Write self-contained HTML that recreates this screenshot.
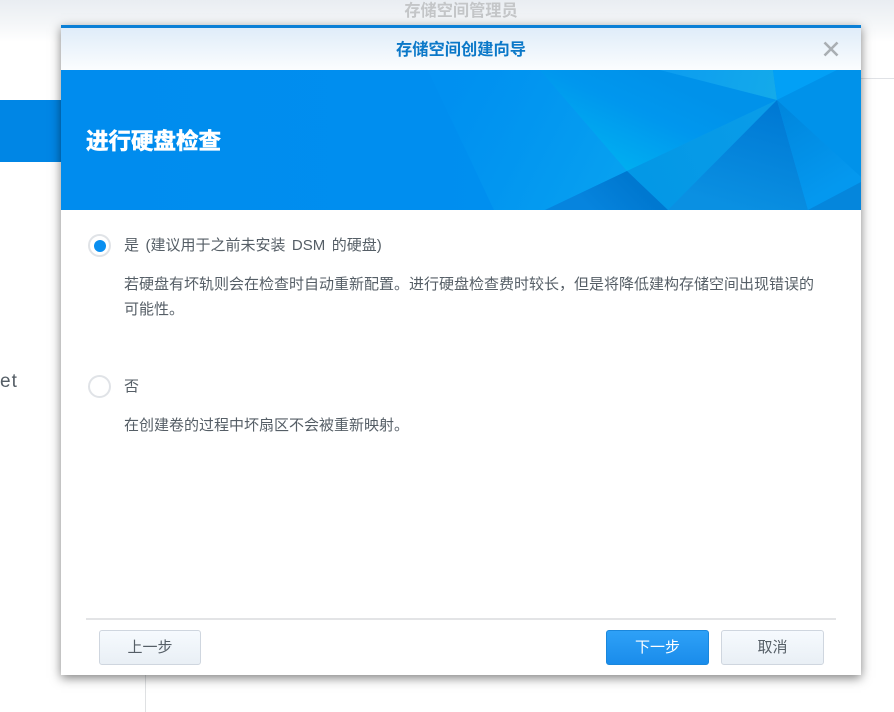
<!DOCTYPE html>
<html lang="zh">
<head>
<meta charset="utf-8">
<title>存储空间创建向导</title>
<style>
html,body{margin:0;padding:0;}
body{width:894px;height:712px;position:relative;overflow:hidden;background:#fff;font-family:"Liberation Sans","Noto Sans CJK SC",sans-serif;color:#555e66;}
.abs{position:absolute;white-space:nowrap;}
#top{left:0;top:0;width:894px;height:42px;background:linear-gradient(#e9edf2,#f4f6f8 55%,#fff);}
#apptitle{left:300px;width:322px;text-align:center;top:1px;font-size:16.2px;line-height:20px;font-weight:bold;color:#c4c6c8;}
#bar{left:0;top:100px;width:70px;height:62px;background:#0086e5;}
#et{left:0;top:372px;font-size:19px;line-height:20px;color:#555e66;letter-spacing:1px;}
#vline{left:145px;top:660px;width:1px;height:52px;background:#dfe1e3;}
#hline{left:850px;top:78px;width:44px;height:1px;background:#e0e2e6;}
#dlg{left:61px;top:25px;width:800px;height:650px;background:#fff;box-shadow:0 3px 10px rgba(0,0,0,.5);}
#hd{left:0;top:0;width:800px;height:45px;box-sizing:border-box;border-top:3px solid #0a7fd6;background:linear-gradient(#dfecf9,#fbfdfe);}
#dtitle{left:0;top:15px;width:800px;text-align:center;font-size:16.25px;line-height:20px;font-weight:bold;color:#0b78c8;}
#x{left:761px;top:15px;}
#banner{left:0;top:45px;}
#h1{left:25px;top:102px;font-size:22.5px;line-height:30px;font-weight:bold;color:#fff;-webkit-text-stroke:.6px #fff;}
.t{font-size:15px;line-height:20px;color:#555e66;}
.radio{box-sizing:border-box;width:23px;height:23px;border-radius:50%;border:2px solid #e0e3e7;background:#fff;}
.radio i{position:absolute;left:3.5px;top:3.5px;width:12px;height:12px;border-radius:50%;background:#0a8ff0;}
#rule{left:25px;top:593px;width:750px;height:2px;background:#e3e4e6;}
.btn{box-sizing:border-box;height:35px;top:605px;border:1px solid #cfd6df;border-radius:3px;background:linear-gradient(#f6fafe,#e9eff5);text-align:center;font-size:15px;line-height:33px;color:#555e66;}
.pri{border-color:#1a87dc;background:linear-gradient(#2ea1f7,#1a8ceb);color:#fff;}
</style>
</head>
<body>
<div class="abs" id="top"></div>
<div class="abs" id="apptitle">存储空间管理员</div>
<div class="abs" id="bar"></div>
<div class="abs" id="et">et</div>
<div class="abs" id="vline"></div>
<div class="abs" id="hline"></div>
<div class="abs" id="dlg">
  <div class="abs" id="hd"></div>
  <div class="abs" id="dtitle">存储空间创建向导</div>
  <svg class="abs" id="x" width="18" height="18" viewBox="0 0 18 18"><path d="M2.5 2.5L15.5 15.5M15.5 2.5L2.5 15.5" stroke="#a9aeb3" stroke-width="2.6" fill="none"/></svg>
  <svg class="abs" id="banner" width="800" height="140" viewBox="61 70 800 140">
    <defs>
      <linearGradient id="b0" x1="0" x2="1" y1="0" y2="0"><stop offset="0" stop-color="#008cee"/><stop offset=".45" stop-color="#008eef"/><stop offset="1" stop-color="#0095f0"/></linearGradient>
      <linearGradient id="b1" gradientUnits="userSpaceOnUse" x1="450" y1="110" x2="620" y2="200"><stop offset="0" stop-color="#0093f1" stop-opacity=".5"/><stop offset="1" stop-color="#08a2f0"/></linearGradient>
      <linearGradient id="b2" gradientUnits="userSpaceOnUse" x1="665" y1="80" x2="625" y2="170"><stop offset="0" stop-color="#0092ea"/><stop offset=".4" stop-color="#0097ee"/><stop offset="1" stop-color="#00aef0"/></linearGradient>
      <linearGradient id="b3" gradientUnits="userSpaceOnUse" x1="660" y1="70" x2="775" y2="100"><stop offset="0" stop-color="#0c9cf0"/><stop offset="1" stop-color="#14aaea"/></linearGradient>
      <linearGradient id="b4" gradientUnits="userSpaceOnUse" x1="770" y1="105" x2="740" y2="210"><stop offset="0" stop-color="#0079d4"/><stop offset="1" stop-color="#0a90e2"/></linearGradient>
      <linearGradient id="b5" gradientUnits="userSpaceOnUse" x1="640" y1="170" x2="770" y2="110"><stop offset="0" stop-color="#0398e6"/><stop offset="1" stop-color="#0a9ce8"/></linearGradient>
      <linearGradient id="b6" gradientUnits="userSpaceOnUse" x1="780" y1="105" x2="830" y2="190"><stop offset="0" stop-color="#0086dd"/><stop offset="1" stop-color="#0498ef"/></linearGradient>
      <linearGradient id="b7" gradientUnits="userSpaceOnUse" x1="625" y1="175" x2="590" y2="210"><stop offset="0" stop-color="#0078d0"/><stop offset="1" stop-color="#0684de"/></linearGradient>
    </defs>
    <rect x="61" y="70" width="800" height="140" fill="url(#b0)"/>
    <polygon points="428,70 660,70 777,100 627,171 545,210 494,210" fill="url(#b1)"/>
    <polygon points="540,70 660,70 777,100 627,171" fill="url(#b2)"/>
    <polygon points="660,70 773,70 777,100" fill="url(#b3)"/>
    <polygon points="773,70 837,70 777,100" fill="#02a0f6"/>
    <polygon points="837,70 861,70 861,177 777,100" fill="#0092ea"/>
    <polygon points="627,171 777,100 668,210" fill="url(#b5)"/>
    <polygon points="545,210 627,171 668,210" fill="url(#b7)"/>
    <polygon points="668,210 777,100 808,210" fill="url(#b4)"/>
    <polygon points="777,100 861,177 861,182 808,210" fill="url(#b6)"/>
    <polygon points="808,210 861,182 861,210" fill="#0586dc"/>
  </svg>
  <div class="abs" id="h1">进行硬盘检查</div>

  <div class="abs radio" style="left:27px;top:209px;"><i></i></div>
  <div class="abs t" style="left:63px;top:211px;word-spacing:2.3px;">是 (建议用于之前未安装 DSM 的硬盘)</div>
  <div class="abs t" style="left:63px;top:250px;">若硬盘有坏轨则会在检查时自动重新配置。进行硬盘检查费时较长，但是将降低建构存储空间出现错误的</div>
  <div class="abs t" style="left:63px;top:275px;">可能性。</div>

  <div class="abs radio" style="left:27px;top:350px;"></div>
  <div class="abs t" style="left:63px;top:352px;">否</div>
  <div class="abs t" style="left:63px;top:391px;">在创建卷的过程中坏扇区不会被重新映射。</div>

  <div class="abs" id="rule"></div>
  <div class="abs btn" style="left:38px;width:102px;">上一步</div>
  <div class="abs btn pri" style="left:545px;width:103px;">下一步</div>
  <div class="abs btn" style="left:660px;width:103px;">取消</div>
</div>
</body>
</html>
